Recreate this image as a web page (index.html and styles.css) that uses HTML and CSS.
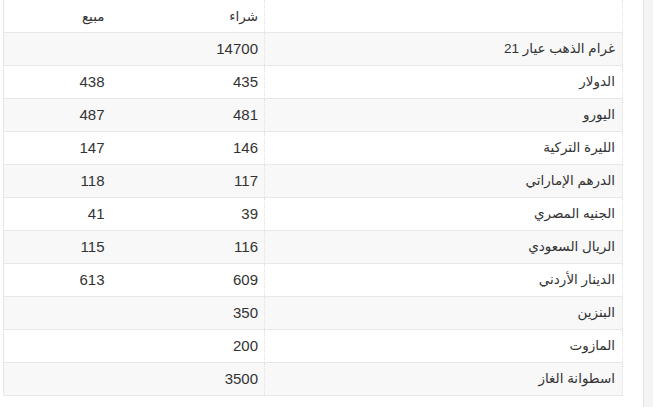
FILE: index.html
```html
<!DOCTYPE html>
<html lang="ar">
<head>
<meta charset="utf-8">
<link rel="stylesheet" href="styles.css">
</head>
<body>
<div class="page">
  <main class="main">
    <table class="prices">
      <colgroup>
        <col class="c-name"><col class="c-buy"><col class="c-sell">
      </colgroup>
      <thead>
        <tr><th class="name"></th><th>شراء</th><th>مبيع</th></tr>
      </thead>
      <tbody>
        <tr><td class="name">غرام الذهب عيار 21</td><td>14700</td><td></td></tr>
        <tr><td class="name">الدولار</td><td>435</td><td>438</td></tr>
        <tr><td class="name">اليورو</td><td>481</td><td>487</td></tr>
        <tr><td class="name">الليرة التركية</td><td>146</td><td>147</td></tr>
        <tr><td class="name">الدرهم الإماراتي</td><td>117</td><td>118</td></tr>
        <tr><td class="name">الجنيه المصري</td><td>39</td><td>41</td></tr>
        <tr><td class="name">الريال السعودي</td><td>116</td><td>115</td></tr>
        <tr><td class="name">الدينار الأردني</td><td>609</td><td>613</td></tr>
        <tr><td class="name">البنزين</td><td>350</td><td></td></tr>
        <tr><td class="name">المازوت</td><td>200</td><td></td></tr>
        <tr><td class="name">اسطوانة الغاز</td><td>3500</td><td></td></tr>
      </tbody>
    </table>
  </main>
  <aside class="side"></aside>
</div>
</body>
</html>
```

FILE: styles.css
```css
html, body {
  margin: 0;
  padding: 0;
  background: #fff;
}
body {
  font-family: "Liberation Sans", "DejaVu Sans", sans-serif;
  font-size: 15px;
  color: #333;
}
.page {
  display: flex;
  height: 407px;
  overflow: hidden;
}
.main {
  width: 643px;
  padding-left: 3px;
  box-sizing: border-box;
}
.side {
  flex: 1;
  border-left: 1px solid #e3e3e3;
  background: #f4f4f4;
}
.prices {
  direction: rtl;
  width: 619px;
  border-collapse: collapse;
  table-layout: fixed;
  border-left: 1px solid #e6e6e6;
}
.c-name { width: 358px; }
.c-buy { width: 154px; }
.c-sell { width: 107px; }
.prices th,
.prices td {
  height: 32px;
  padding: 0 6px;
  text-align: right;
  font-weight: normal;
  border-bottom: 1px solid #e8e8e8;
  line-height: 18px;
  vertical-align: middle;
}
.prices thead th {
  height: 30px;
  padding-top: 2px;
  font-size: 13.5px;
}
.prices .name {
  padding: 0 7px;
  font-size: 13.5px;
  border-left: 1px dotted #e0e0e0;
  border-right: 1px dotted #e0e0e0;
}
.prices tbody tr:nth-child(odd) {
  background: #f8f8f8;
}
```
